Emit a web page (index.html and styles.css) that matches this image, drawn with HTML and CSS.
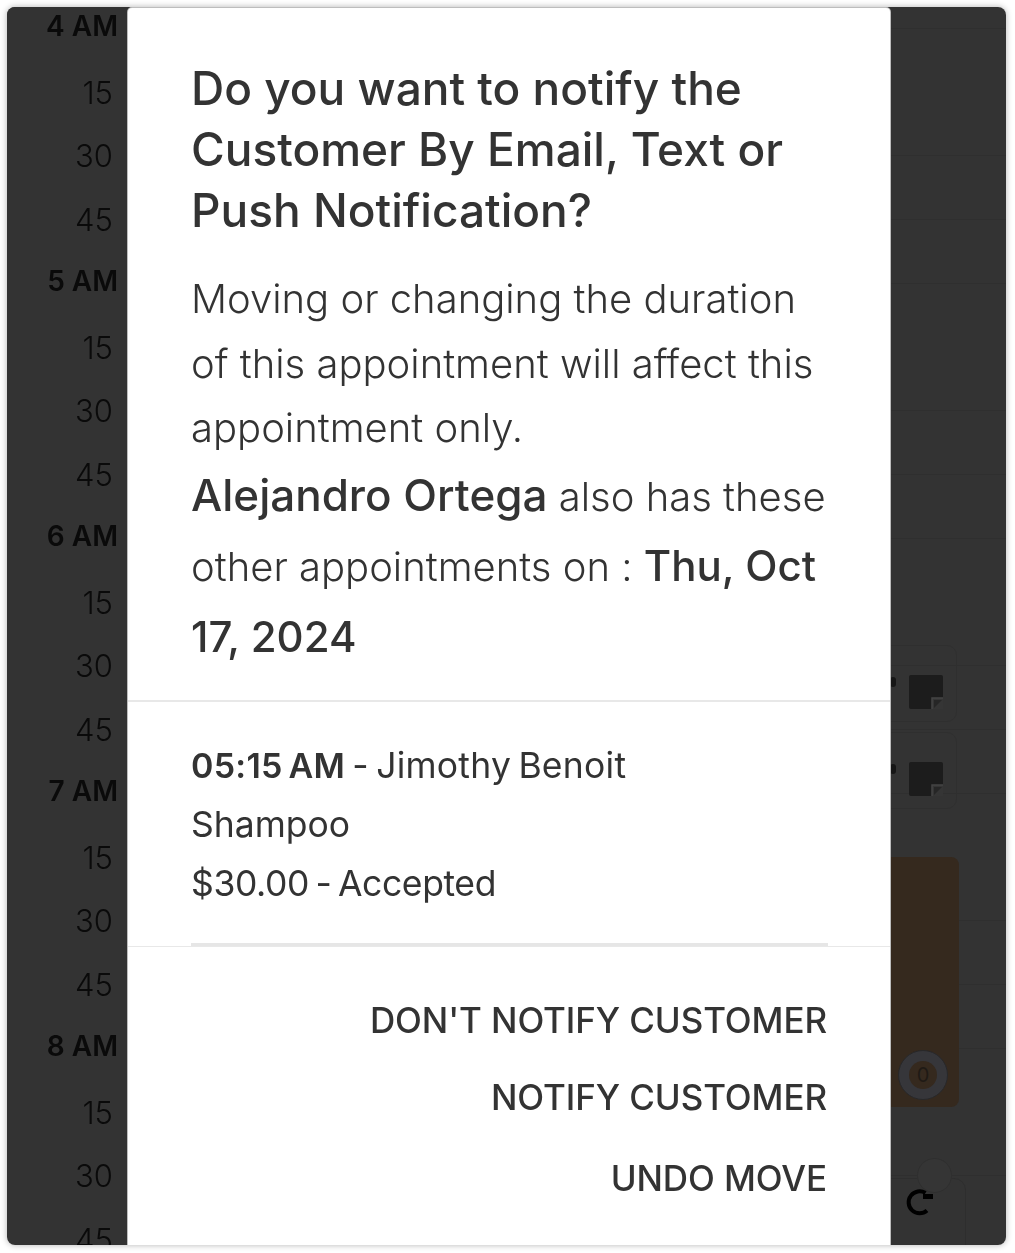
FILE: index.html
```html
<!DOCTYPE html>
<html lang="en">
<head>
  <meta charset="UTF-8">
  <meta name="viewport" content="width=device-width, initial-scale=1.0">
  <title>Notify customer</title>
  <link rel="stylesheet" href="styles.css">
</head>
<body>
  <div class="frame">
    <div class="calendar">
      <ul class="times">
        <li class="hour">4 AM</li><li>15</li><li>30</li><li>45</li>
        <li class="hour">5 AM</li><li>15</li><li>30</li><li>45</li>
        <li class="hour">6 AM</li><li>15</li><li>30</li><li>45</li>
        <li class="hour">7 AM</li><li>15</li><li>30</li><li>45</li>
        <li class="hour">8 AM</li><li>15</li><li>30</li><li>45</li>
      </ul>

      <div class="note-card note-card-one">
        <span class="note-dot"></span>
        <svg class="note-icon" viewBox="0 0 34 34"><path d="M2 0h30a2 2 0 0 1 2 2v30a2 2 0 0 1-2 2H2a2 2 0 0 1-2-2V2a2 2 0 0 1 2-2z" fill="#1c1c1c"/><path d="M23 34V23h11v11z" fill="#353535"/><path d="M23 34V23h11" fill="none" stroke="#444" stroke-width="1.5"/><path d="M25 33V25h8z" fill="#262626"/></svg>
      </div>
      <div class="note-card note-card-two">
        <span class="note-dot"></span>
        <svg class="note-icon" viewBox="0 0 34 34"><path d="M2 0h30a2 2 0 0 1 2 2v30a2 2 0 0 1-2 2H2a2 2 0 0 1-2-2V2a2 2 0 0 1 2-2z" fill="#1c1c1c"/><path d="M23 34V23h11v11z" fill="#353535"/><path d="M23 34V23h11" fill="none" stroke="#444" stroke-width="1.5"/><path d="M25 33V25h8z" fill="#262626"/></svg>
      </div>

      <div class="appointment"></div>
      <div class="badge"><span>0</span></div>

      <div class="fab-card"></div>
      <div class="fab-circle"></div>
      <svg class="refresh" viewBox="0 0 28 28"><path d="M22 22.5A11 11 0 1 1 20.5 5" fill="none" stroke="#000" stroke-width="4"/><path d="M18 6h10v5H18z" fill="#000"/></svg>
    </div>

    <div class="modal">
      <div class="modal-head">
        <h1>Do you want to notify the Customer By Email, Text or Push Notification?</h1>
        <p class="message">Moving or changing the duration of this appointment will affect this appointment only.</p>
        <p class="others"><strong class="name">Alejandro Ortega</strong> also has these other appointments on : <strong>Thu, Oct 17, 2024</strong></p>
      </div>
      <div class="modal-list">
        <div class="appt-row">
          <p class="appt-title"><b>05:15 AM</b> - Jimothy Benoit</p>
          <p>Shampoo</p>
          <p class="appt-price">$30.00 - Accepted</p>
        </div>
      </div>
      <div class="modal-actions">
        <a href="#">DON'T NOTIFY CUSTOMER</a>
        <a href="#">NOTIFY CUSTOMER</a>
        <a href="#">UNDO MOVE</a>
      </div>
    </div>
  </div>
</body>
</html>
```

FILE: styles.css
```css
* {
  margin: 0;
  padding: 0;
  box-sizing: border-box;
  font-family: 'Inter', 'Liberation Sans', sans-serif;
}

html, body {
  height: 100%;
  background: #fff;
  overflow: hidden;
}

body {
  padding: 7px 9px 8px 7px;
}

.frame {
  position: relative;
  height: 100%;
  border-radius: 8px;
  overflow: hidden;
  background: #333;
}

body::before {
  content: '';
  position: fixed;
  top: 7px;
  left: 7px;
  right: 9px;
  bottom: 8px;
  border-radius: 8px;
  box-shadow: 0 0 6px rgba(0, 0, 0, 0.3);
}

.calendar {
  height: 100%;
  background-image: repeating-linear-gradient(to bottom, transparent 0, transparent 63px, #2f2f2f 63px, #2f2f2f 63.75px);
  background-position: 0 -29px;
}

.times {
  list-style: none;
  width: 121px;
  margin-top: -13px;
  height: 100%;
  background: #333;
}

.times li {
  height: 63.75px;
  display: flex;
  align-items: center;
  justify-content: flex-end;
  padding: 5px 15px 0 0;
  font-size: 31px;
  font-weight: 300;
  color: #0a0a0a;
}

.times .hour {
  padding: 0 10px 0 0;
  font-size: 28px;
  font-weight: 600;
}

.note-card {
  position: absolute;
  left: 860px;
  width: 90px;
  height: 77px;
  border: 1px solid #2f2f2f;
  border-radius: 10px;
}

.note-card-one { top: 638px; }
.note-card-two { top: 725px; }

.note-dot {
  position: absolute;
  left: 22px;
  top: 31px;
  width: 6px;
  height: 10px;
  border-radius: 3px;
  background: #161616;
}

.note-icon {
  position: absolute;
  left: 41px;
  top: 29px;
  width: 34px;
  height: 34px;
}

.appointment {
  position: absolute;
  left: 860px;
  top: 850px;
  width: 92px;
  height: 250px;
  border-radius: 8px;
  background: #35291e;
}

.badge {
  position: absolute;
  left: 891px;
  top: 1043px;
  width: 50px;
  height: 50px;
  border-radius: 50%;
  border: 1px solid #28282a;
  background: #36363a;
  display: flex;
  align-items: center;
  justify-content: center;
}

.badge span {
  width: 28px;
  height: 28px;
  border-radius: 50%;
  background: #35291e;
  color: #1f1a15;
  font-size: 20px;
  line-height: 28px;
  text-align: center;
}

.fab-card {
  position: absolute;
  left: 860px;
  top: 1171px;
  width: 99px;
  height: 90px;
  border: 1px solid #2e2e2e;
  border-radius: 12px;
}

.fab-circle {
  position: absolute;
  left: 910px;
  top: 1151px;
  width: 35px;
  height: 35px;
  border-radius: 50%;
  background: #353535;
  border: 1px solid #2f2f2f;
}

.refresh {
  position: absolute;
  left: 898px;
  top: 1181px;
  width: 28px;
  height: 28px;
}

.modal {
  position: absolute;
  top: 1px;
  left: 121px;
  width: 762px;
  bottom: 0;
  background: #fff;
  border-radius: 4px 4px 0 0;
  box-shadow: 0 0 0 1px #bdbdbd;
  color: #333;
}

.modal-head {
  padding: 50px 62px 28px 63px;
  border-bottom: 2px solid #e8e8e8;
}

.modal-head h1 {
  font-size: 46px;
  font-weight: 450;
  line-height: 61px;
  margin-bottom: 26px;
}

.message {
  font-size: 40px;
  font-weight: 300;
  line-height: 64.5px;
}

.others {
  font-size: 40px;
  font-weight: 300;
  line-height: 69.5px;
}

.others strong {
  font-size: 42px;
  font-weight: 500;
}

.others .name {
  font-size: 44px;
}

.modal-list {
  padding: 34px 62px 0 63px;
  border-bottom: 1px solid #e8e8e8;
}

.appt-row {
  padding-bottom: 30px;
  border-bottom: 3px solid #e6e6e6;
}

.appt-row p {
  font-size: 35.5px;
  font-weight: 400;
  line-height: 59px;
}

.appt-row b {
  font-size: 34px;
  font-weight: 600;
}

.appt-title {
  word-spacing: -3px;
  letter-spacing: 0.25px;
}

.appt-price {
  word-spacing: -3px;
  letter-spacing: -0.4px;
}

.modal-actions {
  display: flex;
  flex-direction: column;
  align-items: flex-end;
  gap: 29px;
  padding: 49px 63px 0 63px;
}

.modal-actions a {
  color: #333;
  text-decoration: none;
  font-size: 35px;
  font-weight: 500;
  line-height: 48px;
  letter-spacing: -0.1px;
}

.modal-actions a:last-child {
  margin-top: 4px;
}
```
